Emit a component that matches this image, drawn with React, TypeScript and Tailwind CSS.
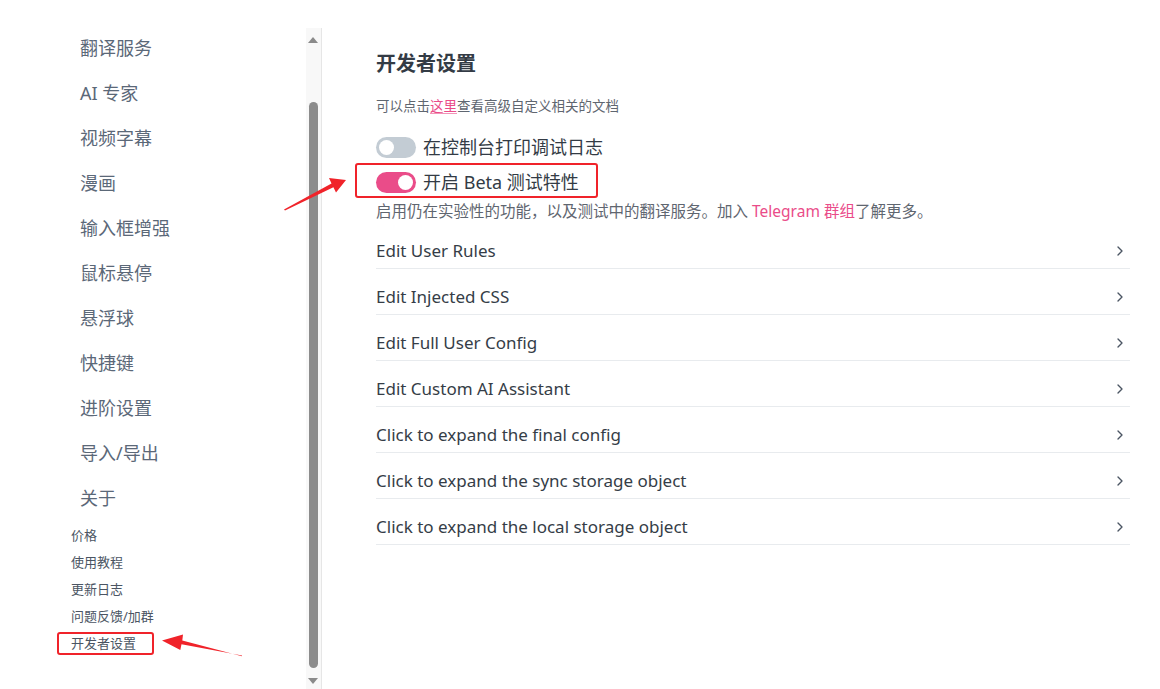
import { ChevronRight } from "lucide-react"

const font = { fontFamily: '"Noto Sans", "Noto Sans CJK SC", sans-serif' }

const navItems = ["翻译服务", "AI 专家", "视频字幕", "漫画", "输入框增强", "鼠标悬停", "悬浮球", "快捷键", "进阶设置", "导入/导出", "关于"]
const subItems = ["价格", "使用教程", "更新日志", "问题反馈/加群", "开发者设置"]
const rows = [
  "Edit User Rules",
  "Edit Injected CSS",
  "Edit Full User Config",
  "Edit Custom AI Assistant",
  "Click to expand the final config",
  "Click to expand the sync storage object",
  "Click to expand the local storage object",
]

function Toggle({ on }: { on: boolean }) {
  return (
    <span
      className={`flex h-[21px] w-[40px] shrink-0 items-center rounded-full px-[3px] ${
        on ? "justify-end bg-[#ea4c89]" : "justify-start bg-[#c3ccd4]"
      }`}
    >
      <span className="h-[15px] w-[15px] rounded-full bg-white" />
    </span>
  )
}

function Sidebar() {
  return (
    <aside className="flex h-full w-[322px] shrink-0">
      <nav className="w-[306px] pl-[71px] pt-[26px]">
        {navItems.map((item) => (
          <div key={item} className="flex h-[45px] items-center pl-[9px] text-[18px] text-[#5b6878]">
            {item}
          </div>
        ))}
        <div className="mt-[1px]">
          {subItems.map((item) => (
            <div key={item} className="flex h-[27px] items-center text-[13px] text-[#4b5563]">
              {item}
            </div>
          ))}
        </div>
      </nav>
      {/* scrollbar */}
      <div className="mt-[28px] flex w-[16px] flex-col items-center border-r border-[#e6e6e6] bg-[#f8f8f8] pr-[1px]">
        <span className="mt-[9px] h-0 w-0 border-x-[5px] border-b-[6px] border-x-transparent border-b-[#8a8a8a]" />
        <span className="mt-[59px] h-[566px] w-[9px] rounded-full bg-[#8c8c8c]" />
        <span className="mt-[10px] h-0 w-0 border-x-[5px] border-t-[6px] border-x-transparent border-t-[#8a8a8a]" />
      </div>
    </aside>
  )
}

export default function App() {
  return (
    <div className="relative flex h-[689px] w-[1160px] overflow-hidden bg-white" style={font}>
      <Sidebar />

      <main className="flex-1 pl-[54px] pr-[30px] pt-[50px]">
        <h1 className="h-[28px] text-[20px] font-bold leading-[28px] text-[#333b45]">开发者设置</h1>
        <p className="mt-[18px] h-[20px] text-[13.5px] leading-[20px] text-[#5f6670]">
          可以点击<span className="text-[#ea4c89] underline decoration-[#ea4c89]/60 underline-offset-2">这里</span>
          查看高级自定义相关的文档
        </p>

        <div className="mt-[14px] flex h-[35px] items-center gap-[7px]">
          <Toggle on={false} />
          <span className="text-[18px] text-[#333b45]">在控制台打印调试日志</span>
        </div>
        <div className="flex h-[35px] items-center gap-[7px]">
          <Toggle on />
          <span className="text-[18px] text-[#333b45]">开启 Beta 测试特性</span>
        </div>
        <p className="mt-[1px] h-[20px] text-[15.5px] leading-[20px] text-[#5f6670]">
          启用仍在实验性的功能，以及测试中的翻译服务。加入 <span className="text-[#ea4c89]">Telegram 群组</span>了解更多。
        </p>

        <ul className="mt-[2px]">
          {rows.map((row) => (
            <li
              key={row}
              className="flex h-[46px] items-start justify-between border-b border-[#e8ebee] pt-[17px] pr-[2px]"
            >
              <span className="text-[17px] leading-[22px] text-[#353d47]">{row}</span>
              <ChevronRight className="mt-[3px] h-[16px] w-[16px] text-[#4b5563]" strokeWidth={2} />
            </li>
          ))}
        </ul>
      </main>

      {/* annotation overlay */}
      <div className="pointer-events-none absolute left-[355px] top-[163px] h-[35px] w-[243px] rounded-[3px] border-2 border-[#f0232a]" />
      <div className="pointer-events-none absolute left-[57px] top-[632px] h-[23px] w-[97px] rounded-[3px] border-2 border-[#f0232a]" />
      <svg className="pointer-events-none absolute left-0 top-0" width="1160" height="689">
        <polygon
          points="284,209.5 331.5,183.6 329,178 346,180 336,192.6 333.4,187.2 285,210.5"
          fill="#f0232a"
        />
        <polygon
          points="242,655.5 181.5,644.3 180.3,650 162,640.5 183,634.5 182.3,640.4 242,656.3"
          fill="#f0232a"
        />
      </svg>
    </div>
  )
}
